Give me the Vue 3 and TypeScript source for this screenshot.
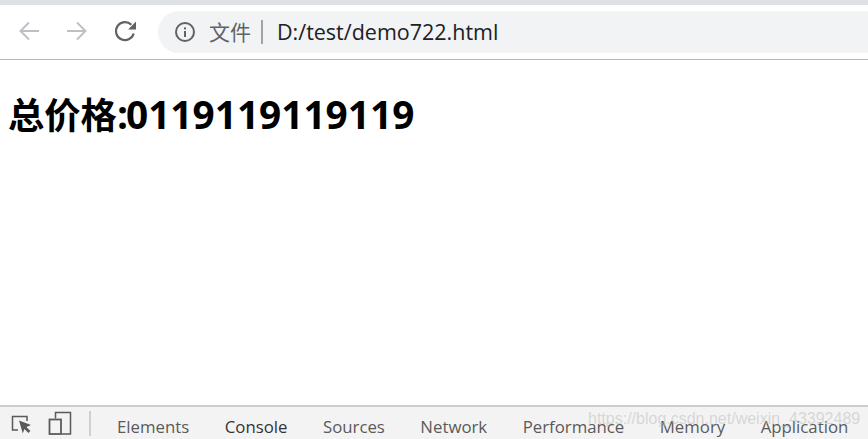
<template>
  <div class="window">
    <div class="strip"></div>
    <header class="toolbar">
      <button class="nav off" aria-label="Back">
        <svg width="24" height="24" viewBox="0 0 24 24"><path d="M22 12H3.5M12 3.5L3.5 12l8.5 8.5" fill="none" stroke="currentColor" stroke-width="2" /></svg>
      </button>
      <button class="nav off" aria-label="Forward">
        <svg width="24" height="24" viewBox="0 0 24 24"><path d="M2 12h18.5M12 3.5l8.5 8.5-8.5 8.5" fill="none" stroke="currentColor" stroke-width="2" /></svg>
      </button>
      <button class="nav" aria-label="Reload">
        <svg width="24" height="24" viewBox="0 0 24 24">
          <path d="M20.7 14.5A9 9 0 1 1 18.4 5.8" fill="none" stroke="currentColor" stroke-width="2.2" />
          <path d="M23 2.6V10.5H15.1Z" fill="currentColor" />
        </svg>
      </button>
      <div class="omnibox">
        <svg class="info" width="22" height="22" viewBox="0 0 22 22">
          <circle cx="11" cy="11" r="9" fill="none" stroke="currentColor" stroke-width="2" />
          <rect x="10" y="10" width="2" height="6" fill="currentColor" />
          <rect x="10" y="6.4" width="2" height="2" fill="currentColor" />
        </svg>
        <span class="scheme">文件</span>
        <span class="sep"></span>
        <span class="url">D:/test/demo722.html</span>
      </div>
    </header>
    <main class="page">
      <h1><span class="cjk">总价格</span><span class="colon">:</span>0119119119119</h1>
    </main>
    <footer class="devtools">
      <svg class="tool" width="24" height="24" viewBox="0 0 24 24">
        <path d="M9 19H3.5V5.5H18V10" fill="none" stroke="#5a5a5a" stroke-width="1.5" />
        <path d="M10 9.5l12 4.6-4.6 1.9 4 4-2 2-4-4-1.6 4.4Z" fill="#5a5a5a" />
      </svg>
      <svg class="tool" width="24" height="24" viewBox="0 0 24 24">
        <path d="M7.5 7.5V1.5H22.5V23H14" fill="none" stroke="#5a5a5a" stroke-width="1.5" />
        <rect x="1.5" y="8.5" width="11.5" height="14.5" fill="none" stroke="#5a5a5a" stroke-width="1.8" />
      </svg>
      <span class="divider"></span>
      <nav class="tabs">
        <span v-for="tab in tabs" :key="tab.name" class="tab" :class="{ current: tab.current }">{{ tab.name }}</span>
      </nav>
      <span class="mark">https://blog.csdn.net/weixin_43392489</span>
    </footer>
  </div>
</template>

<script setup lang="ts">
const tabs = [
  { name: 'Elements' },
  { name: 'Console', current: true },
  { name: 'Sources' },
  { name: 'Network' },
  { name: 'Performance' },
  { name: 'Memory' },
  { name: 'Application' },
];
</script>

<style>
html, body { margin: 0; background: #fff; }
</style>

<style scoped>
.window { width: 868px; height: 439px; display: flex; flex-direction: column; overflow: hidden; font-family: "Open Sans", "Noto Sans CJK SC", sans-serif; }
.strip { height: 5px; background: #dee1e6; }
.toolbar { height: 55px; box-sizing: border-box; border-bottom: 1px solid #b8b8b8; display: flex; align-items: center; padding: 0 0 1px 17px; background: #fff; }
.nav { width: 24px; height: 24px; padding: 0; margin: -1px 24px 0 0; border: 0; background: none; color: #5f6368; }
.nav.off { color: #bdc1c6; }
.nav:nth-child(3) { margin-right: 21px; }
.omnibox { flex: 1; height: 42px; border-radius: 21px 0 0 21px; background: #f1f3f4; display: flex; align-items: center; padding-left: 16px; }
.info { color: #5f6368; }
.scheme { margin: -2px 0 0 13px; font-size: 21px; color: #5f6368; }
.sep { width: 2px; height: 24px; margin: 0 14px 0 10px; background: #a0a2a5; }
.url { font-size: 21.5px; color: #202124; }
.page { flex: 1; padding: 29px 8px 0; background: #fff; }
h1 { margin: 0; font-size: 38.8px; line-height: 50px; font-weight: 700; color: #000; }
.cjk { font-size: 36.3px; }
.colon { margin-right: -2px; }
.devtools { position: relative; height: 34px; box-sizing: border-box; border-top: 2px solid #ccc; background: #f3f3f3; display: flex; align-items: center; padding-left: 9px; }
.tool { flex-shrink: 0; margin-right: 15px; }
.tool + .tool { margin-right: 17px; }
.divider { flex-shrink: 0; width: 2px; height: 25px; background: #d0d0d0; }
.tabs { display: flex; margin: 6px 0 0 26px; gap: 35.5px; font-size: 16.8px; color: #5a5a5a; white-space: nowrap; }
.tab.current { color: #333; }
.mark { position: absolute; left: 588px; top: 3px; font-size: 16px; color: rgba(190, 190, 190, .55); white-space: nowrap; font-family: "Liberation Sans", sans-serif; }
</style>
